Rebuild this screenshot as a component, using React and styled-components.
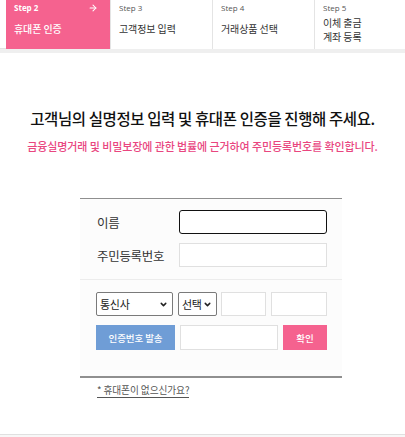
import React from "react";
import styled, { createGlobalStyle } from "styled-components";
import { ArrowRight, ChevronDown } from "lucide-react";

const Global = createGlobalStyle`
  html, body { margin: 0; padding: 0; background: #fff; }
  body { font-family: "Noto Sans CJK KR", "Noto Sans", sans-serif; color: #222; }
  * { box-sizing: border-box; }
`;

const Page = styled.div`
  width: 405px;
  height: 437px;
  overflow: hidden;
  display: flex;
  flex-direction: column;
`;

const Tabs = styled.div`
  display: flex;
  height: 53px;
  padding-left: 6px;
  border-bottom: 4px solid #efefef;
  box-shadow: inset 0 -1px 0 #e2e2e2;
`;

const Tab = styled.div`
  width: ${(p) => p.$w}px;
  flex: ${(p) => (p.$grow ? 1 : "none")};
  height: 49px;
  padding: 2px 8px 0;
  background: ${(p) => (p.$active ? "#f5628f" : "#fff")};
  color: ${(p) => (p.$active ? "#fff" : "#333")};
  border-left: ${(p) => (p.$active ? "none" : "1px solid #e4e4e4")};
  display: flex;
  flex-direction: column;
`;

const StepRow = styled.div`
  display: flex;
  justify-content: space-between;
  align-items: center;
  font-family: "Open Sans", "Noto Sans", sans-serif;
  font-size: 8px;
  font-weight: ${(p) => (p.$active ? 700 : 400)};
  color: ${(p) => (p.$active ? "#fff" : "#555")};
  height: 11px;
  line-height: 11px;
  padding-right: 4px;
`;

const TabLabel = styled.div`
  font-size: 10px;
  line-height: 14px;
  letter-spacing: -0.1px;
  margin-top: ${(p) => p.$mt}px;
  font-weight: ${(p) => (p.$active ? 500 : 400)};
`;

const Heading = styled.h1`
  margin: 55px 0 0;
  text-align: center;
  font-size: 15.5px;
  font-weight: 500;
  letter-spacing: -0.4px;
  color: #111;
  line-height: 20px;
`;

const Notice = styled.p`
  margin: 11px 0 0;
  text-align: center;
  font-size: 11px;
  font-weight: 500;
  letter-spacing: -0.1px;
  color: #e9467f;
  line-height: 14px;
`;

const FormBox = styled.div`
  margin: 45px 0 0 80px;
  width: 262px;
  border-top: 1px solid #8f8f8f;
  border-bottom: 2px solid #8f8f8f;
  background: #fcfcfc;
`;

const Section = styled.div`
  padding: ${(p) => p.$pad};
  display: flex;
  flex-direction: column;
  gap: 9px;
  border-bottom: ${(p) => (p.$sep ? "1px solid #ececec" : "none")};
`;

const FieldRow = styled.div`
  display: flex;
  align-items: center;
`;

const Label = styled.span`
  width: 82px;
  font-size: 12.5px;
  color: #333;
  letter-spacing: -0.3px;
`;

const TextInput = styled.div`
  width: ${(p) => p.$w}px;
  height: ${(p) => p.$h || 24}px;
  background: #fff;
  border: ${(p) => (p.$focus ? "1.5px solid #111" : "1px solid #e0e0e0")};
  border-radius: ${(p) => (p.$focus ? 3 : 0)}px;
  margin-left: ${(p) => p.$ml || 0}px;
`;

const Controls = styled.div`
  display: flex;
  align-items: center;
`;

const SelectBox = styled.div`
  width: ${(p) => p.$w}px;
  height: 24px;
  background: #fff;
  border: 1px solid #7a7a7a;
  border-radius: 2px;
  margin-left: ${(p) => p.$ml || 0}px;
  display: flex;
  align-items: center;
  justify-content: space-between;
  padding: 0 4px 0 3px;
  font-size: 11px;
  color: #222;
  letter-spacing: -0.3px;
`;

const Button = styled.div`
  width: ${(p) => p.$w}px;
  height: 25px;
  margin-left: ${(p) => p.$ml || 0}px;
  background: ${(p) => p.$bg};
  color: #fff;
  display: flex;
  align-items: center;
  justify-content: center;
  font-size: 9.5px;
  font-weight: 500;
  letter-spacing: -0.1px;
`;

const LinkText = styled.a`
  margin: 6px 0 0 97px;
  align-self: flex-start;
  font-size: 9.7px;
  color: #555;
  text-decoration: none;
  border-bottom: 1px solid #555;
  line-height: 13px;
  letter-spacing: -0.1px;
`;

const Spacer = styled.div`
  flex: 1;
`;

const BottomLine = styled.div`
  height: 3px;
  border-top: 1px solid #e0e0e0;
  background: #f7f7f7;
`;

const tabs = [
  { step: "Step 2", lines: ["휴대폰 인증"], active: true, w: 104 },
  { step: "Step 3", lines: ["고객정보 입력"], w: 102 },
  { step: "Step 4", lines: ["거래상품 선택"], w: 102 },
  { step: "Step 5", lines: ["이체 출금", "계좌 등록"], grow: true },
];

export default function App() {
  return (
    <Page>
      <Global />
      <Tabs>
        {tabs.map((t) => (
          <Tab key={t.step} $active={t.active} $w={t.w} $grow={t.grow}>
            <StepRow $active={t.active}>
              <span>{t.step}</span>
              {t.active && <ArrowRight size={10} strokeWidth={2.5} color="#fff" />}
            </StepRow>
            <TabLabel $active={t.active} $mt={t.lines.length > 1 ? 3 : 9}>
              {t.lines.map((l) => (
                <div key={l}>{l}</div>
              ))}
            </TabLabel>
          </Tab>
        ))}
      </Tabs>
      <Heading>고객님의 실명정보 입력 및 휴대폰 인증을 진행해 주세요.</Heading>
      <Notice>금융실명거래 및 비밀보장에 관한 법률에 근거하여 주민등록번호를 확인합니다.</Notice>
      <FormBox>
        <Section $pad="11px 15px 12px 17px" $sep>
          <FieldRow>
            <Label>이름</Label>
            <TextInput $w={148} $focus />
          </FieldRow>
          <FieldRow>
            <Label>주민등록번호</Label>
            <TextInput $w={148} />
          </FieldRow>
        </Section>
        <Section $pad="12px 15px 26px 16px">
          <Controls>
            <SelectBox $w={77}>
              <span>통신사</span>
              <ChevronDown size={9} strokeWidth={4} />
            </SelectBox>
            <SelectBox $w={39} $ml={5}>
              <span>선택</span>
              <ChevronDown size={9} strokeWidth={4} />
            </SelectBox>
            <TextInput $w={45} $ml={4} />
            <TextInput $w={56} $ml={5} />
          </Controls>
          <Controls>
            <Button $w={79} $bg="#6f9dd6">인증번호 발송</Button>
            <TextInput $w={98} $h={25} $ml={5} />
            <Button $w={44} $ml={5} $bg="#f5628f">확인</Button>
          </Controls>
        </Section>
      </FormBox>
      <LinkText href="#">* 휴대폰이 없으신가요?</LinkText>
      <Spacer />
      <BottomLine />
    </Page>
  );
}
